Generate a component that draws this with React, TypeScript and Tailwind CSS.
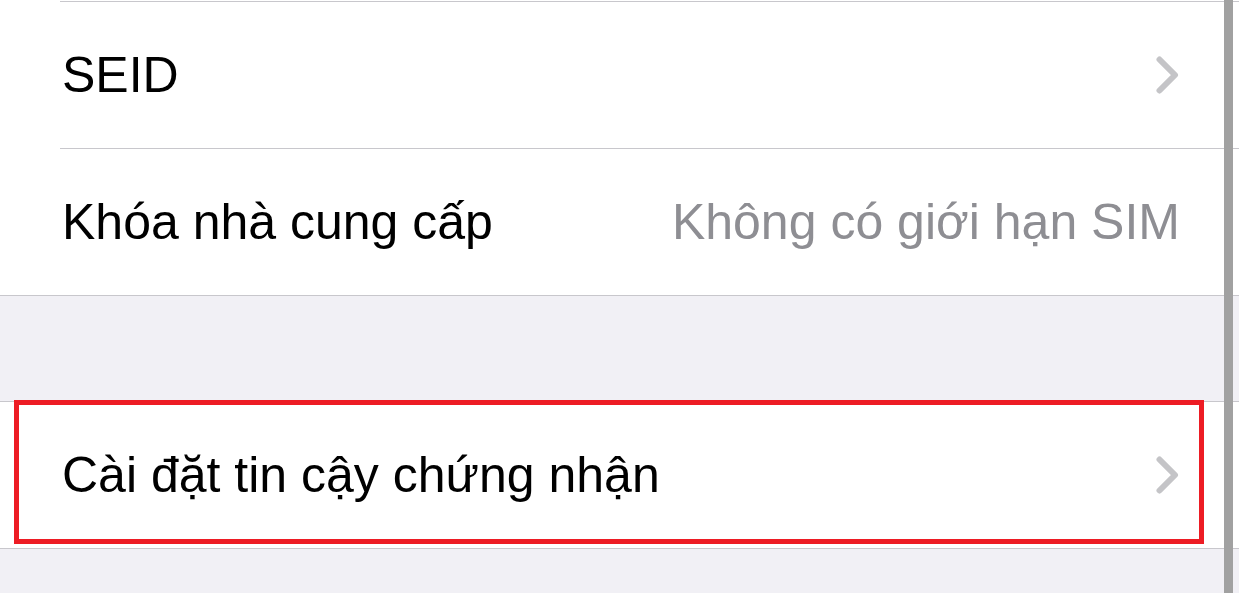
import React from "react";

const Chevron = () => (
  <svg width="24" height="38" viewBox="0 0 24 38" className="shrink-0">
    <polyline
      points="3.5,3.5 19,19 3.5,34.5"
      fill="none"
      stroke="#c4c4c7"
      strokeWidth="6"
      strokeLinecap="round"
      strokeLinejoin="round"
    />
  </svg>
);

const Row = ({ label, value, chevron }: { label: string; value?: string; chevron?: boolean }) => (
  <div className="h-[146px] flex items-center justify-between pl-[62px] pr-[59px] bg-white">
    <span className="text-black">{label}</span>
    {value && <span className="text-[#8e8e93]">{value}</span>}
    {chevron && <Chevron />}
  </div>
);

export default function App() {
  return (
    <div
      className="relative w-[1239px] h-[593px] overflow-hidden bg-[#f1f0f5] text-[50px] leading-none"
      style={{ fontFamily: '"Liberation Sans", Arial, sans-serif' }}
    >
      <div className="h-px bg-white" />
      <div className="bg-white">
        <div className="ml-[60px] h-px bg-[#c8c7cc]" />
        <Row label="SEID" chevron />
        <div className="ml-[60px] h-px bg-[#c8c7cc]" />
        <Row label="Khóa nhà cung cấp" value="Không có giới hạn SIM" />
      </div>
      <div className="h-px bg-[#c8c7cc]" />
      <div className="h-[105px]" />
      <div className="h-px bg-[#c8c7cc]" />
      <Row label="Cài đặt tin cậy chứng nhận" chevron />
      <div className="h-px bg-[#c8c7cc]" />

      {/* red highlight box */}
      <div className="absolute left-[14px] top-[400px] w-[1190px] h-[144px] border-[5px] border-[#ed1c24]" />
      {/* scrollbar */}
      <div className="absolute left-[1224px] top-0 w-[9px] h-full bg-[#a1a1a1]" />
    </div>
  );
}
